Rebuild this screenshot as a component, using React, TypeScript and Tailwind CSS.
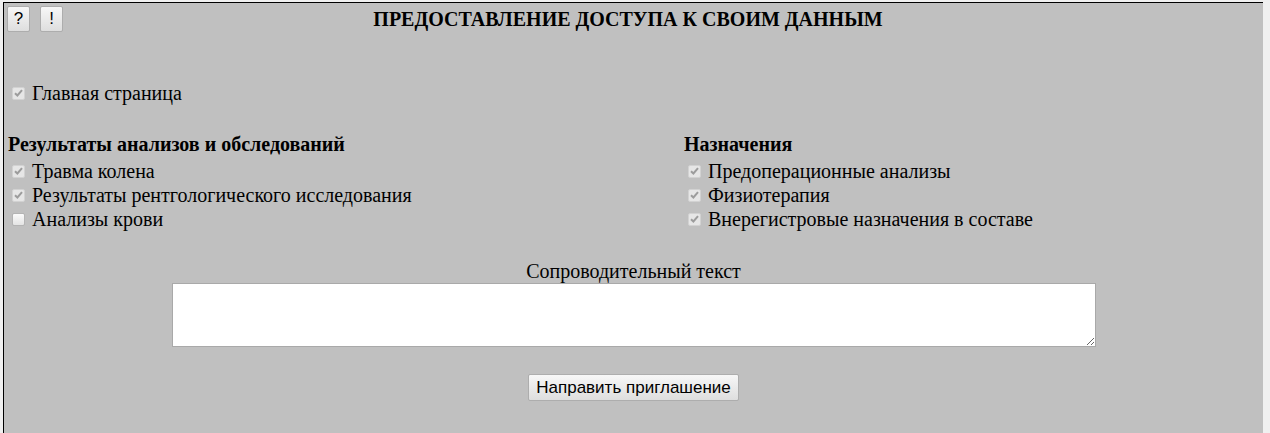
import React from "react";

type Item = { label: string; checked: boolean; disabled?: boolean };

const leftItems: Item[] = [
  { label: "Травма колена", checked: true, disabled: true },
  { label: "Результаты рентгологического исследования", checked: true, disabled: true },
  { label: "Анализы крови", checked: false },
];

const rightItems: Item[] = [
  { label: "Предоперационные анализы", checked: true, disabled: true },
  { label: "Физиотерапия", checked: true, disabled: true },
  { label: "Внерегистровые назначения в составе", checked: true, disabled: true },
];

function Box({ checked, disabled }: { checked: boolean; disabled?: boolean }) {
  if (disabled) {
    return (
      <span className="flex h-[13px] w-[13px] shrink-0 items-center justify-center rounded-[2px] border border-[#d2d2d2] bg-[#e6e6e6]">
        <svg width="9" height="8" viewBox="0 0 9 8">
          {checked && (
            <path d="M1 4.2 L3.4 6.5 L8 1.2" fill="none" stroke="#9c9c9c" strokeWidth="2" />
          )}
        </svg>
      </span>
    );
  }
  return (
    <span className="flex h-[13px] w-[13px] shrink-0 items-center justify-center rounded-[2px] border border-[#b4b4b4] bg-gradient-to-b from-[#fbfbfb] to-[#e4e4e4]" />
  );
}

function CheckRow({ item }: { item: Item }) {
  return (
    <label className="flex h-6 items-center pl-2">
      <Box checked={item.checked} disabled={item.disabled} />
      <span className="ml-[7px]">{item.label}</span>
    </label>
  );
}

const btn =
  "rounded-[2px] border border-[#adadad] bg-gradient-to-b from-[#f7f7f7] to-[#dedede] font-['Liberation_Sans',Arial,sans-serif] text-black";

export default function App() {
  return (
    <div className="min-h-[433px] bg-[#f0f0f0] pl-[3px] pt-[2px]">
      <div className="min-h-[431px] w-[1260px] border-l border-t border-black bg-[#c0c0c0] font-['Liberation_Serif','Times_New_Roman',serif] text-[20px] leading-6 text-black">
        {/* header */}
        <div className="grid h-[78px]">
          <div className="col-start-1 row-start-1 flex gap-[10px] pl-[3px] pt-[3px]">
            <button className={`${btn} h-[26px] w-[23px] text-[17px]`}>?</button>
            <button className={`${btn} h-[26px] w-[23px] text-[17px]`}>!</button>
          </div>
          <h1 className="col-start-1 row-start-1 pr-[11px] pt-[4px] text-center text-[20px] font-bold">
            ПРЕДОСТАВЛЕНИЕ ДОСТУПА К СВОИМ ДАННЫМ
          </h1>
        </div>

        <CheckRow item={{ label: "Главная страница", checked: true, disabled: true }} />

        {/* sections */}
        <div className="mt-[27px] grid grid-cols-[676px_1fr]">
          <div>
            <div className="h-[27px] pl-1 font-bold">Результаты анализов и обследований</div>
            {leftItems.map((it) => (
              <CheckRow key={it.label} item={it} />
            ))}
          </div>
          <div>
            <div className="h-[27px] pl-1 font-bold">Назначения</div>
            {rightItems.map((it) => (
              <CheckRow key={it.label} item={it} />
            ))}
          </div>
        </div>

        {/* note */}
        <div className="mt-[28px] flex flex-col items-center">
          <div className="h-6">Сопроводительный текст</div>
          <textarea className="block h-[64px] w-[924px] border border-[#a9a9a9] bg-white" />
          <button className={`${btn} mt-[27px] h-[27px] w-[211px] text-[17px]`}>
            Направить приглашение
          </button>
        </div>
      </div>
    </div>
  );
}
